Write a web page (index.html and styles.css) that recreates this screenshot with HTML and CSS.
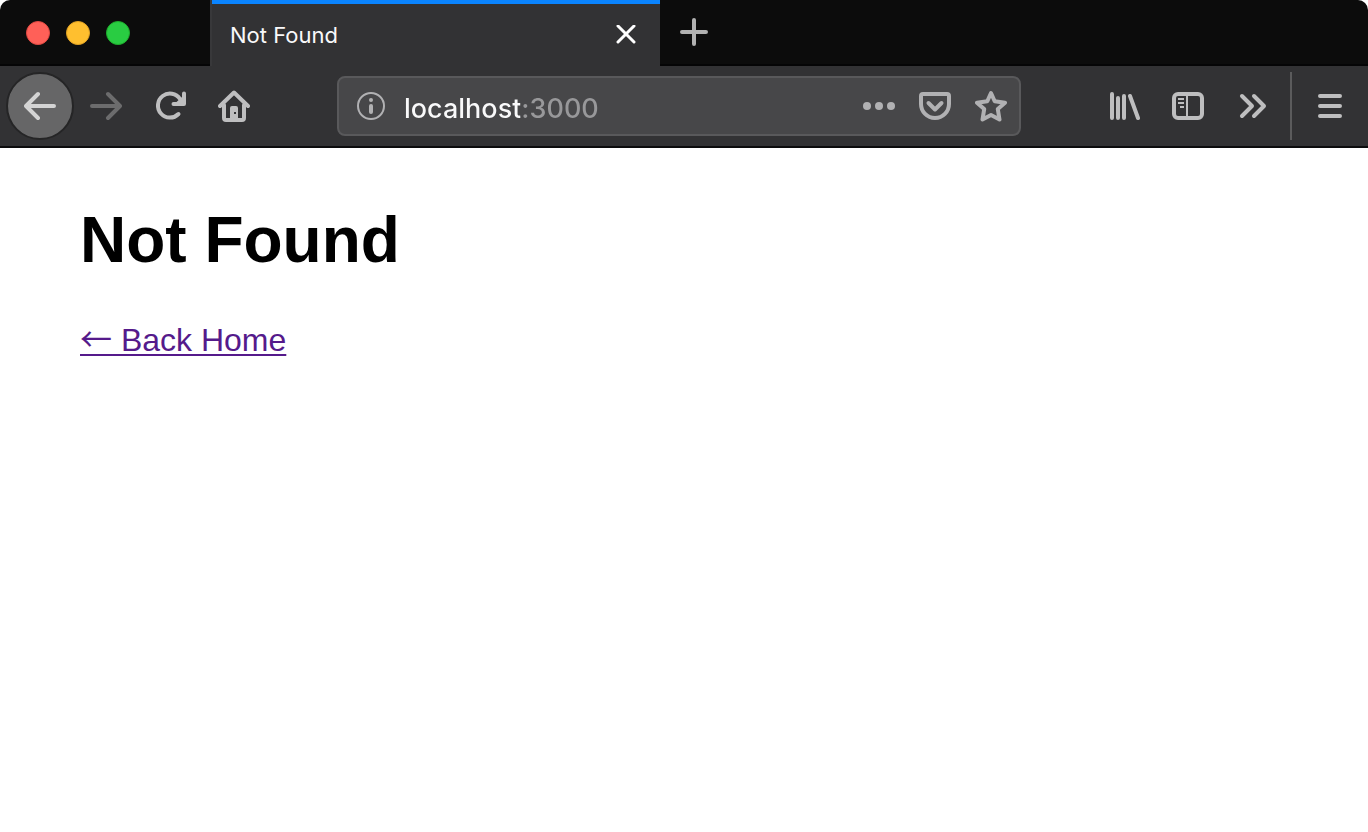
FILE: index.html
```html
<!DOCTYPE html>
<html lang="en">
<head>
<meta charset="utf-8">
<title>Not Found</title>
<link rel="stylesheet" href="styles.css">
</head>
<body>
<div class="browser">
  <header class="chrome">
    <div class="tab-strip">
      <div class="window-controls">
        <button class="dot dot-close" aria-label="Close window"></button>
        <button class="dot dot-minimize" aria-label="Minimize window"></button>
        <button class="dot dot-zoom" aria-label="Zoom window"></button>
      </div>
      <div class="tab">
        <span class="tab-title">Not Found</span>
        <button class="icon-button tab-close" aria-label="Close tab">
          <svg width="20" height="20" viewBox="0 0 20 20"><path d="M2 1l16 16M18 1L2 17" stroke-width="3"/></svg>
        </button>
      </div>
      <button class="icon-button new-tab" aria-label="New tab">
        <svg width="28" height="28" viewBox="0 0 28 28"><path d="M14 2v24M2 14h24" stroke-width="4"/></svg>
      </button>
    </div>
    <nav class="toolbar">
      <button class="icon-button back" aria-label="Back">
        <svg width="32" height="32" viewBox="0 0 32 32"><path d="M30 16H3M14 4L2 16l12 12" stroke-width="4"/></svg>
      </button>
      <button class="icon-button forward" aria-label="Forward">
        <svg width="32" height="32" viewBox="0 0 32 32"><path d="M2 16h27M18 4l12 12-12 12" stroke-width="4"/></svg>
      </button>
      <button class="icon-button" aria-label="Reload">
        <svg width="32" height="32" viewBox="0 0 32 32"><path d="M24.500 24A12 12 0 1 1 26 9" stroke-width="4"/><path class="solid" d="M32 3.500V14a2 2 0 0 1-2 2H19.500a2 2 0 0 1 0-4h3L28 7V3.500a2 2 0 0 1 4 0z"/></svg>
      </button>
      <button class="icon-button" aria-label="Home">
        <svg width="32" height="32" viewBox="0 0 32 32"><path d="M2 16L16 2.500 30 16M6 15v13a2 2 0 0 0 2 2h16a2 2 0 0 0 2-2V15" stroke-width="4"/><path class="solid" fill-rule="evenodd" d="M12 31V18a2 2 0 0 1 2-2h4a2 2 0 0 1 2 2v13zM16 22v2h2v-2z"/></svg>
      </button>
      <div class="url-bar">
        <button class="icon-button" aria-label="Site information">
          <svg width="28" height="28" viewBox="0 0 28 28"><circle cx="14" cy="14" r="13" stroke-width="2"/><circle class="solid" cx="14" cy="8" r="2"/><path d="M14 14v6" stroke-width="4"/></svg>
        </button>
        <input class="url-input" type="text" aria-label="Address" value="localhost:3000">
        <button class="icon-button" aria-label="Page actions">
          <svg width="32" height="32" viewBox="0 0 32 32"><g class="solid"><circle cx="4" cy="16" r="4"/><circle cx="16" cy="16" r="4"/><circle cx="28" cy="16" r="4"/></g></svg>
        </button>
        <button class="icon-button" aria-label="Save to Pocket">
          <svg width="32" height="32" viewBox="0 0 32 32"><path d="M4 4h24a2 2 0 0 1 2 2v8a14 14 0 0 1-28 0V6a2 2 0 0 1 2-2z" stroke-width="4"/><path d="M9.500 13l6.500 6.500 6.500-6.500" stroke-width="4"/></svg>
        </button>
        <button class="icon-button" aria-label="Bookmark this page">
          <svg width="32" height="32" viewBox="0 0 32 32"><path d="M16 3l3.700 8.300 10.300 1.400-7.200 6.400 1.700 10.400L16 25l-8.500 4.500 1.700-10.400L2 12.700l10.300-1.400z" stroke-width="4"/></svg>
        </button>
      </div>
      <button class="icon-button" aria-label="Library">
        <svg width="32" height="32" viewBox="0 0 32 32"><path d="M4 4v24M10 8v20M16 6v22M22 6l8 22" stroke-width="4"/></svg>
      </button>
      <button class="icon-button" aria-label="Sidebars">
        <svg width="32" height="32" viewBox="0 0 32 32"><rect x="2" y="4" width="28" height="24" rx="4" stroke-width="4"/><path class="thin" d="M15 5v22M6 9h6M6 13h6M8 17h4"/></svg>
      </button>
      <button class="icon-button" aria-label="More tools">
        <svg width="32" height="32" viewBox="0 0 32 32"><path d="M6 6l10 10L6 26M18 6l10 10-10 10" stroke-width="4"/></svg>
      </button>
      <div class="separator"></div>
      <button class="icon-button" aria-label="Open menu">
        <svg width="32" height="32" viewBox="0 0 32 32"><path d="M6 6h20M6 16h20M6 26h20" stroke-width="4"/></svg>
      </button>
    </nav>
  </header>
  <main class="page">
    <h1 class="page-title">Not Found</h1>
    <a class="home-link" href="#"><span class="arrow">←</span> Back Home</a>
  </main>
</div>
</body>
</html>
```
FILE: styles.css
```css
* {
  box-sizing: border-box;
}

body {
  margin: 0;
  background: #fff;
}

.chrome {
  border-radius: 10px 10px 0 0;
  overflow: hidden;
  font-family: Inter, "Liberation Sans", sans-serif;
}

button {
  border: 0;
  padding: 0;
}

.icon-button {
  display: flex;
  flex: none;
  align-items: center;
  justify-content: center;
  background: none;
  color: #bebebf;
}

svg {
  display: block;
  fill: none;
  stroke: currentColor;
  stroke-linecap: round;
  stroke-linejoin: round;
}

.solid {
  fill: currentColor;
  stroke: none;
}

.thin {
  stroke-width: 2px;
  stroke-linecap: butt;
}

.tab-strip {
  display: flex;
  height: 66px;
  background: #0c0c0c;
  box-shadow: inset 0 -2px #050506;
}

.window-controls {
  display: flex;
  align-items: center;
  gap: 16px;
  width: 210px;
  padding-left: 26px;
}

.dot {
  width: 24px;
  height: 24px;
  border-radius: 50%;
}

.dot-close {
  background: #ff6058;
  border: 1px solid #e14942;
}

.dot-minimize {
  background: #ffbf2f;
  border: 1px solid #e0a123;
}

.dot-zoom {
  background: #29cc42;
  border: 1px solid #1dad2b;
}

.tab {
  display: flex;
  align-items: center;
  justify-content: space-between;
  width: 450px;
  padding: 4px 24px 0 18px;
  border-left: 2px solid #38383a;
  background: linear-gradient(#0a84ff 4px, #323234 4px);
}

.tab-title {
  color: #f9f9fa;
  font-size: 22px;
  line-height: 28px;
}

.tab-close {
  color: #fff;
}

.new-tab {
  width: 68px;
  height: 64px;
  color: #b1b1b1;
}

.toolbar {
  display: flex;
  align-items: center;
  height: 82px;
  padding: 0 22px 0 6px;
  border-bottom: 2px solid #0c0c0d;
  background: #323234;
  gap: 32px;
}

.back {
  width: 68px;
  height: 68px;
  margin-right: -16px;
  border: 2px solid #252526;
  border-radius: 50%;
  background: #666667;
  color: #d4d4d4;
}

.forward {
  color: #6c6c6d;
}

.url-bar {
  display: flex;
  flex: 1;
  align-items: center;
  gap: 24px;
  min-width: 0;
  height: 60px;
  margin: 0 55px;
  padding: 0 12px 0 18px;
  border: 2px solid #59595b;
  border-radius: 8px;
  background: #474749;
}

.url-bar .icon-button {
  color: #b1b1b3;
}

.url-input {
  flex: 1;
  min-width: 0;
  height: 44px;
  margin-left: -5px;
  padding: 4px 0 0;
  border: 0;
  outline: 0;
  background: linear-gradient(90deg, #f9f9fa 116px, #98989a 116px);
  background-clip: text;
  color: transparent;
  font: 500 27px/40px Inter, "Liberation Sans", sans-serif;
}

.separator {
  width: 2px;
  height: 68px;
  margin: 0 -10px;
  background: #5b5b5c;
}

.page {
  padding: 56px 80px;
  font-family: "Liberation Sans", Arial, sans-serif;
}

.page-title {
  margin: 0 0 43px;
  color: #000;
  font-size: 64px;
  line-height: 72px;
}

.home-link {
  color: #551a8b;
  font-size: 32px;
  line-height: 36px;
  text-decoration-thickness: 2px;
  text-underline-offset: 3px;
}

.arrow {
  font-family: "Noto Sans CJK JP", sans-serif;
}
```
